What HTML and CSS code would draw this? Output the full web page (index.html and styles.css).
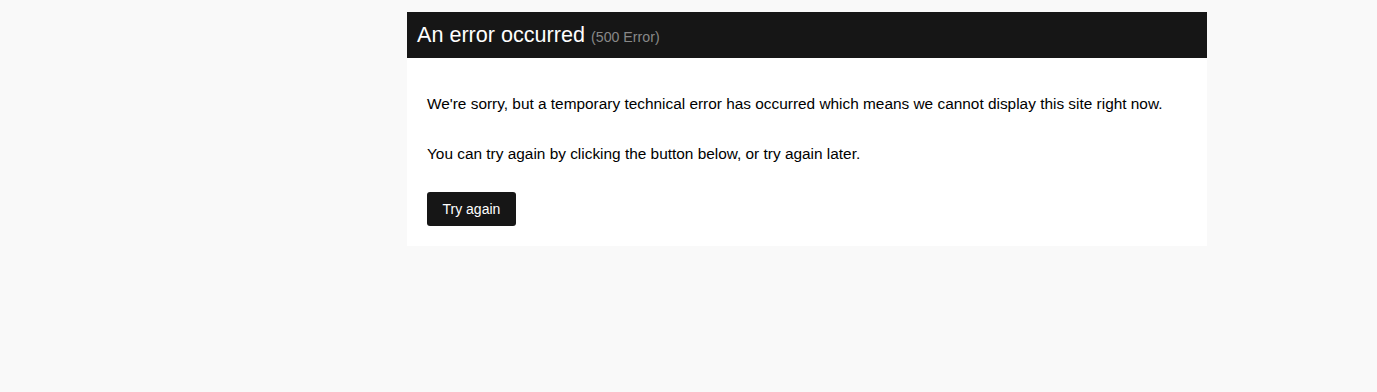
FILE: index.html
```html
<!DOCTYPE html>
<html lang="en">
<head>
    <meta charset="UTF-8">
    <meta name="viewport" content="width=device-width, initial-scale=1.0">
    <title>An error occurred</title>
    <link rel="stylesheet" href="styles.css">
</head>
<body>
    <div class="page">
        <div class="error-box">
            <div class="error-header">
                <h1>An error occurred <small>(500 Error)</small></h1>
            </div>
            <div class="error-body">
                <p>We're sorry, but a temporary technical error has occurred which means we cannot display this site right now.</p>
                <p class="last">You can try again by clicking the button below, or try again later.</p>
                <a href="#" class="btn">Try again</a>
            </div>
        </div>
    </div>
</body>
</html>
```

FILE: styles.css
```css
/* Base */
body {
    margin: 0;
    font-family: "Liberation Sans", Arial, sans-serif;
    background-color: #f9f9f9;
    color: #000;
}

.page {
    padding: 12px 0 0 407px;
}

.error-box {
    width: 800px;
    background: #fff;
}

.error-header {
    background: #161616;
    color: #fff;
    padding: 10px;
    height: 26px;
}

.error-header h1 {
    margin: 0;
    font-size: 21.6px;
    font-weight: normal;
    line-height: 26px;
}

.error-header small {
    font-size: 14.2px;
    line-height: 1;
    color: #888;
}

.error-body {
    padding: 36px 20px 20px;
}

.error-body p {
    margin: 0 0 30px;
    font-size: 15.4px;
    line-height: 20px;
}

.error-body p.last {
    margin-bottom: 28px;
}

.btn {
    display: inline-block;
    background: #161616;
    color: #fff;
    font-size: 14px;
    line-height: 34px;
    padding: 0 15.5px;
    border-radius: 3px;
    text-decoration: none;
}
```
